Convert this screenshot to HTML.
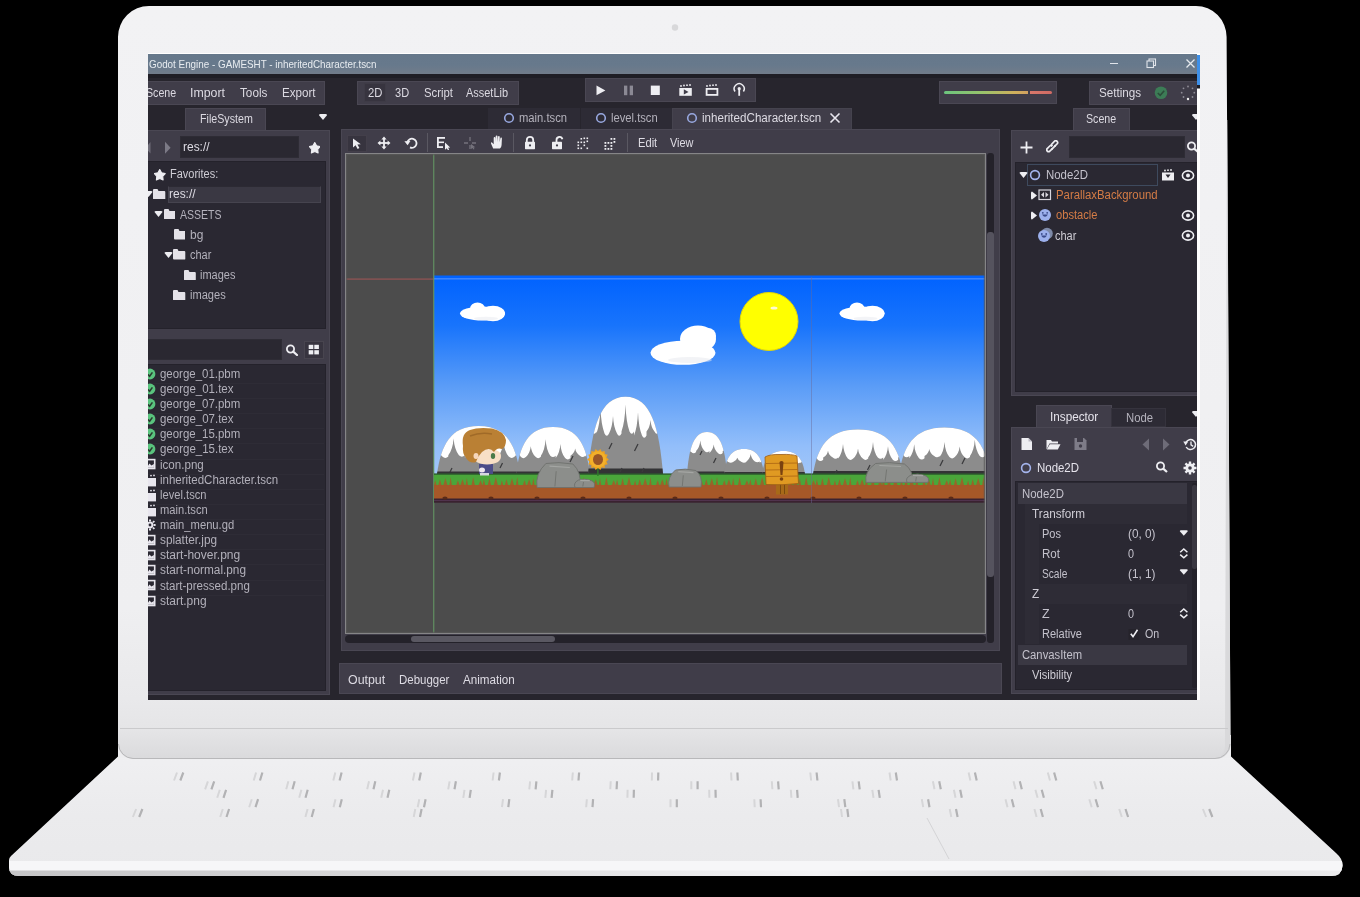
<!DOCTYPE html>
<html><head><meta charset="utf-8">
<style>
*{margin:0;padding:0;box-sizing:border-box}
html,body{width:1360px;height:897px;overflow:hidden;background:#000}
body{position:relative;font-family:"Liberation Sans",sans-serif}
.a{position:absolute}
.t{position:absolute;white-space:nowrap}
#scr{position:absolute;left:148px;top:54px;width:1049px;height:646px;background:#27252d;overflow:hidden;filter:blur(0.4px)}
</style></head><body>
<svg class="a" style="left:0;top:0" width="1360" height="897" viewBox="0 0 1360 897">
<defs>
<linearGradient id="bg1" x1="0" y1="0" x2="0" y2="1"><stop offset="0" stop-color="#f0f0f2"/><stop offset="0.5" stop-color="#ebebed"/><stop offset="1" stop-color="#e9e9eb"/></linearGradient><linearGradient id="lidg" gradientUnits="userSpaceOnUse" x1="0" y1="6" x2="0" y2="759"><stop offset="0" stop-color="#f2f2f4"/><stop offset="0.8" stop-color="#efeff1"/><stop offset="0.92" stop-color="#e9e9eb"/><stop offset="0.96" stop-color="#e5e5e7"/><stop offset="1" stop-color="#dadadc"/></linearGradient>
<linearGradient id="bot" x1="0" y1="0" x2="1" y2="0"><stop offset="0" stop-color="#c4c4c6"/><stop offset="0.35" stop-color="#dcdcde"/><stop offset="0.6" stop-color="#f2f2f4"/><stop offset="0.8" stop-color="#d6d6d8"/><stop offset="1" stop-color="#ececee"/></linearGradient>
<filter id="kb" x="-10%" y="-10%" width="120%" height="120%"><feGaussianBlur stdDeviation="0.45"/></filter><clipPath id="basec"><path d="M118 756.5 L1231 756.5 L1336 853 Q1343 859 1342.5 866 Q1342 876 1331 876 L19 876 Q9 876 9 867 L9 860 Q9 858 11 856 Z"/></clipPath>
</defs>
<g clip-path="url(#basec)">
<rect x="0" y="750" width="1360" height="130" fill="url(#bg1)"/>
<rect x="0" y="861" width="1360" height="10" fill="#f6f6f8"/>
<rect x="0" y="870.5" width="1360" height="6" fill="url(#bot)"/>
</g>
<path d="M177.0 772.5 L174.0 780.5 M256.1 772.5 L253.7 780.5 M335.3 772.5 L333.3 780.5 M414.5 772.5 L412.9 780.5 M493.6 772.5 L492.6 780.5 M572.8 772.5 L572.2 780.5 M652.0 772.5 L651.8 780.5 M731.1 772.5 L731.5 780.5 M810.3 772.5 L811.1 780.5 M889.5 772.5 L890.7 780.5 M968.6 772.5 L970.4 780.5 M1047.8 772.5 L1050.0 780.5 M207.9 781.3 L205.1 789.3 M288.4 781.3 L286.2 789.3 M369.0 781.3 L367.2 789.3 M449.6 781.3 L448.2 789.3 M530.1 781.3 L529.3 789.3 M610.7 781.3 L610.3 789.3 M691.3 781.3 L691.3 789.3 M771.8 781.3 L772.4 789.3 M852.4 781.3 L853.4 789.3 M932.9 781.3 L934.5 789.3 M1013.5 781.3 L1015.5 789.3 M1094.1 781.3 L1096.5 789.3 M219.8 789.8 L217.2 797.8 M301.4 789.8 L299.2 797.8 M383.0 789.8 L381.2 797.8 M464.5 789.8 L463.3 797.8 M546.1 789.8 L545.3 797.8 M627.6 789.8 L627.4 797.8 M709.2 789.8 L709.4 797.8 M790.8 789.8 L791.4 797.8 M872.3 789.8 L873.5 797.8 M953.9 789.8 L955.5 797.8 M1035.4 789.8 L1037.6 797.8 M251.8 799.2 L249.2 807.2 M335.5 799.2 L333.5 807.2 M419.3 799.2 L417.7 807.2 M503.0 799.2 L502.0 807.2 M586.8 799.2 L586.2 807.2 M670.5 799.2 L670.5 807.2 M754.3 799.2 L754.7 807.2 M838.0 799.2 L839.0 807.2 M921.8 799.2 L923.2 807.2 M1005.5 799.2 L1007.5 807.2 M1089.3 799.2 L1091.7 807.2 M136.1 809.0 L132.9 817.0 M222.8 809.0 L220.2 817.0 M307.6 809.0 L305.4 817.0 M415.3 809.0 L413.7 817.0 M841.0 809.0 L842.0 817.0 M949.7 809.0 L951.3 817.0 M1034.4 809.0 L1036.6 817.0 M1119.2 809.0 L1121.8 817.0 M1202.9 809.0 L1206.1 817.0" stroke="#d6d6d8" stroke-width="2" fill="none" filter="url(#kb)"/><path d="M183.3 772.5 L180.3 780.5 M262.4 772.5 L260.0 780.5 M341.6 772.5 L339.6 780.5 M420.8 772.5 L419.2 780.5 M499.9 772.5 L498.9 780.5 M579.1 772.5 L578.5 780.5 M658.3 772.5 L658.1 780.5 M737.4 772.5 L737.8 780.5 M816.6 772.5 L817.4 780.5 M895.8 772.5 L897.0 780.5 M974.9 772.5 L976.7 780.5 M1054.1 772.5 L1056.3 780.5 M214.2 781.3 L211.4 789.3 M294.7 781.3 L292.5 789.3 M375.3 781.3 L373.5 789.3 M455.9 781.3 L454.5 789.3 M536.4 781.3 L535.6 789.3 M617.0 781.3 L616.6 789.3 M697.6 781.3 L697.6 789.3 M778.1 781.3 L778.7 789.3 M858.7 781.3 L859.7 789.3 M939.2 781.3 L940.8 789.3 M1019.8 781.3 L1021.8 789.3 M1100.4 781.3 L1102.8 789.3 M226.1 789.8 L223.5 797.8 M307.7 789.8 L305.5 797.8 M389.3 789.8 L387.5 797.8 M470.8 789.8 L469.6 797.8 M552.4 789.8 L551.6 797.8 M633.9 789.8 L633.7 797.8 M715.5 789.8 L715.7 797.8 M797.1 789.8 L797.7 797.8 M878.6 789.8 L879.8 797.8 M960.2 789.8 L961.8 797.8 M1041.7 789.8 L1043.9 797.8 M258.1 799.2 L255.5 807.2 M341.8 799.2 L339.8 807.2 M425.6 799.2 L424.0 807.2 M509.3 799.2 L508.3 807.2 M593.1 799.2 L592.5 807.2 M676.8 799.2 L676.8 807.2 M760.6 799.2 L761.0 807.2 M844.3 799.2 L845.3 807.2 M928.1 799.2 L929.5 807.2 M1011.8 799.2 L1013.8 807.2 M1095.6 799.2 L1098.0 807.2 M142.4 809.0 L139.2 817.0 M229.1 809.0 L226.5 817.0 M313.9 809.0 L311.7 817.0 M421.6 809.0 L420.0 817.0 M847.3 809.0 L848.3 817.0 M956.0 809.0 L957.6 817.0 M1040.7 809.0 L1042.9 817.0 M1125.5 809.0 L1128.1 817.0 M1209.2 809.0 L1212.4 817.0" stroke="#b2b2b4" stroke-width="2.2" fill="none" filter="url(#kb)"/>
<path d="M927 818 L949 859" stroke="#d4d4d6" stroke-width="1"/><rect x="1210" y="735" width="21" height="23" fill="#eeeef0"/><rect x="118" y="735" width="16" height="23" fill="#eeeef0"/>
<path d="M118 37 A31 31 0 0 1 149 6 L1196 6 A30.6 31 0 0 1 1226.6 37 L1230.5 744 A15 15 0 0 1 1215.5 759 L133 759 A15 15 0 0 1 118 744 Z" fill="url(#lidg)"/>
<path d="M1226.9 120 L1227.3 120 L1230.5 744 A15 15 0 0 1 1216 759 L1213 759 A12 13 0 0 0 1225 746 Z" fill="#d9d9db"/>
<path d="M118.5 744 A15 15 0 0 0 133 758.5 L1215 758.5 A15 15 0 0 0 1230 744" stroke="#b8b8ba" stroke-width="1" fill="none"/>
<line x1="120" y1="728.5" x2="1228" y2="728.5" stroke="#cacacc" stroke-width="1"/>
<rect x="148" y="53" width="1052" height="1" fill="#ffffff"/>
<rect x="1197" y="54" width="3" height="646" fill="#ffffff"/>
<rect x="1197" y="55" width="3" height="30" fill="#3d8fe8"/>
<rect x="1197" y="85" width="3" height="3.5" fill="#1e1e26"/>
<circle cx="675" cy="27.5" r="3.2" fill="#d8d8da"/>
</svg>
<div id="scr"><div class="a" style="left:-148px;top:-54px;width:1360px;height:897px">
<div class="a" style="left:148px;top:54px;width:1049px;height:20px;background:linear-gradient(180deg,#66788b 0%,#67798c 55%,#717c8a 100%);"></div>
<div class="a" style="left:148px;top:74px;width:1049px;height:3.5px;background:#1f1e25;"></div>
<div class="t" style="left:149.00px;top:59.19px;font-size:11px;line-height:11px;color:#e8ecf0;transform:scaleX(0.8952);transform-origin:0 0;">Godot Engine - GAMESHT - inheritedCharacter.tscn</div>
<div class="a" style="left:1110px;top:63px;width:8px;height:1.3px;background:#e0e4ea;"></div>
<svg class="a" style="left:1146px;top:58px;" width="11" height="11" viewBox="0 0 11 11"><rect x="3" y="1" width="6.5" height="6.5" fill="none" stroke="#dfe3e9" stroke-width="1.1"/><rect x="1" y="3" width="6.5" height="6.5" fill="#66798c" stroke="#dfe3e9" stroke-width="1.1"/></svg>
<svg class="a" style="left:1185px;top:58px;" width="11" height="11" viewBox="0 0 11 11"><path d="M1.5 1.5L9.5 9.5M9.5 1.5L1.5 9.5" stroke="#e6eaee" stroke-width="1.3"/></svg>
<div class="a" style="left:140px;top:81px;width:185px;height:24px;background:#403d49;border:1px solid #4a4753;"></div>
<div class="t" style="left:146.00px;top:86.64px;font-size:12px;line-height:12px;color:#dcdae2;transform:scaleX(0.8875);transform-origin:0 0;">Scene</div>
<div class="t" style="left:190.10px;top:86.64px;font-size:12px;line-height:12px;color:#dcdae2;transform:scaleX(1.0291);transform-origin:0 0;">Import</div>
<div class="t" style="left:239.60px;top:86.64px;font-size:12px;line-height:12px;color:#dcdae2;transform:scaleX(0.9780);transform-origin:0 0;">Tools</div>
<div class="t" style="left:281.50px;top:86.64px;font-size:12px;line-height:12px;color:#dcdae2;transform:scaleX(0.9688);transform-origin:0 0;">Export</div>
<div class="a" style="left:357px;top:81px;width:162px;height:24px;background:#403d49;border:1px solid #4a4753;"></div>
<div class="a" style="left:364px;top:83px;width:22px;height:19px;background:#37343f;border:1px solid #3e3b46;"></div>
<div class="t" style="left:367.50px;top:86.64px;font-size:12px;line-height:12px;color:#dcdae2;transform:scaleX(0.9387);transform-origin:0 0;">2D</div>
<div class="t" style="left:395.30px;top:86.64px;font-size:12px;line-height:12px;color:#dcdae2;transform:scaleX(0.9191);transform-origin:0 0;">3D</div>
<div class="t" style="left:423.50px;top:86.64px;font-size:12px;line-height:12px;color:#dcdae2;transform:scaleX(0.9454);transform-origin:0 0;">Script</div>
<div class="t" style="left:466.00px;top:86.64px;font-size:12px;line-height:12px;color:#dcdae2;transform:scaleX(0.9125);transform-origin:0 0;">AssetLib</div>
<div class="a" style="left:585px;top:78px;width:171px;height:24px;background:#403d49;border:1px solid #4a4753;"></div>
<svg class="a" style="left:585px;top:78px;" width="171" height="24" viewBox="0 0 171 24"><path d="M11.5 7.6 L20.4 12.4 L11.5 17.2 Z" fill="#eeeef2"/><rect x="39" y="7.6" width="3.3" height="9.6" fill="#8b8994"/><rect x="44.7" y="7.6" width="3.3" height="9.6" fill="#8b8994"/><rect x="65.8" y="7.6" width="9" height="9.4" fill="#eeeef2"/><g fill="#eeeef2"><circle cx="96" cy="8" r="0.9"/><circle cx="99" cy="7.5" r="0.9"/><circle cx="102" cy="7.2" r="0.9"/><circle cx="105" cy="7" r="0.9"/><rect x="94.3" y="10" width="12.5" height="7.8"/></g><path d="M98.8 11.2 L103.5 13.9 L98.8 16.6Z" fill="#403d49"/><g fill="#eeeef2"><circle cx="122" cy="8" r="0.9"/><circle cx="125" cy="7.5" r="0.9"/><circle cx="128" cy="7.2" r="0.9"/><circle cx="131" cy="7" r="0.9"/><rect x="120.7" y="10" width="12.6" height="7.8"/></g><rect x="122.5" y="11.8" width="9" height="4.2" fill="#403d49"/><path d="M154.2 17.8 L154.2 11.5" stroke="#eeeef2" stroke-width="1.8"/><path d="M150 13.5 A5 5 0 1 1 158.4 13.5" fill="none" stroke="#eeeef2" stroke-width="1.5"/><circle cx="154.2" cy="10.7" r="1.6" fill="#eeeef2"/></svg>
<div class="a" style="left:939px;top:81px;width:118px;height:23px;background:#403d49;border:1px solid #4a4753;"></div>
<div class="a" style="left:944px;top:91px;width:108px;height:3px;border-radius:1.5px;background:linear-gradient(90deg,#6cc47e 0%,#98c46c 35%,#d0b05c 65%,#d0a060 78%,#403d49 78%,#403d49 80%,#d8786a 80%,#d06a64 100%)"></div>
<div class="a" style="left:1089px;top:81px;width:120px;height:24px;background:#403d49;border:1px solid #4a4753;"></div>
<div class="t" style="left:1098.80px;top:87.09px;font-size:12px;line-height:12px;color:#dcdae2;transform:scaleX(0.9732);transform-origin:0 0;">Settings</div>
<svg class="a" style="left:1152px;top:84px;" width="18" height="18" viewBox="0 0 18 18"><circle cx="9" cy="8.8" r="6.3" fill="#3c7c56"/><path d="M5.8 9 L8.2 11.3 L12.2 6.8" fill="none" stroke="#2c4c3a" stroke-width="1.6"/></svg>
<svg class="a" style="left:1178px;top:83px;" width="20" height="20" viewBox="0 0 20 20"><g fill="#8e8c96"><circle cx="10" cy="3.5" r="0.9"/><circle cx="14.5" cy="5.3" r="0.9"/><circle cx="16.3" cy="9.7" r="0.9"/><circle cx="14.5" cy="14" r="0.9"/><circle cx="5.5" cy="14" r="0.9"/><circle cx="3.7" cy="9.7" r="0.9"/><circle cx="5.5" cy="5.3" r="0.9"/></g><circle cx="10" cy="16" r="1.2" fill="#f0f0f0"/></svg>
<div class="a" style="left:185px;top:108px;width:81px;height:23px;background:#403d49;border:1px solid #4a4753;border-bottom:none"></div>
<div class="t" style="left:199.50px;top:112.74px;font-size:12px;line-height:12px;color:#dcdae2;transform:scaleX(0.8897);transform-origin:0 0;">FileSystem</div>
<svg class="a" style="left:317px;top:112px;" width="12" height="10" viewBox="0 0 12 10"><path d="M2 3.2 Q2 2 3.5 2 L8.5 2 Q10 2 10 3.2 L6 8 Z" fill="#eeeef2"/></svg>
<div class="a" style="left:488px;top:108px;width:92px;height:21px;background:#2d2b35;"></div>
<div class="a" style="left:581px;top:108px;width:91px;height:21px;background:#2d2b35;"></div>
<div class="a" style="left:672px;top:108px;width:180px;height:22px;background:#403d49;border:1px solid #45434e;border-bottom:none"></div>
<svg class="a" style="left:501.8px;top:111px;" width="14" height="14" viewBox="0 0 14 14"><circle cx="7" cy="7" r="4.3" fill="none" stroke="#98a8e0" stroke-width="1.6"/></svg>
<svg class="a" style="left:594px;top:111px;" width="14" height="14" viewBox="0 0 14 14"><circle cx="7" cy="7" r="4.3" fill="none" stroke="#98a8e0" stroke-width="1.6"/></svg>
<svg class="a" style="left:685.3px;top:111px;" width="14" height="14" viewBox="0 0 14 14"><circle cx="7" cy="7" r="4.3" fill="none" stroke="#98a8e0" stroke-width="1.6"/></svg>
<div class="t" style="left:519.10px;top:112.44px;font-size:12px;line-height:12px;color:#b4b2bc;transform:scaleX(0.9366);transform-origin:0 0;">main.tscn</div>
<div class="t" style="left:611.30px;top:112.44px;font-size:12px;line-height:12px;color:#b4b2bc;transform:scaleX(0.9335);transform-origin:0 0;">level.tscn</div>
<div class="t" style="left:702.10px;top:112.44px;font-size:12px;line-height:12px;color:#dedce4;transform:scaleX(0.9667);transform-origin:0 0;">inheritedCharacter.tscn</div>
<svg class="a" style="left:829px;top:112px;" width="12" height="12" viewBox="0 0 12 12"><path d="M1.5 1.5L10.5 10.5M10.5 1.5L1.5 10.5" stroke="#e8e6ee" stroke-width="1.6"/></svg>
<div class="a" style="left:1073px;top:108px;width:57px;height:23px;background:#403d49;border:1px solid #4a4753;border-bottom:none"></div>
<div class="t" style="left:1086.30px;top:112.59px;font-size:12px;line-height:12px;color:#dcdae2;transform:scaleX(0.8875);transform-origin:0 0;">Scene</div>
<svg class="a" style="left:1190px;top:112px;" width="12" height="10" viewBox="0 0 12 10"><path d="M2 3.2 Q2 2 3.5 2 L8.5 2 Q10 2 10 3.2 L6 8 Z" fill="#eeeef2"/></svg>
<div class="a" style="left:140px;top:130px;width:190px;height:565px;background:#403d49;border:1px solid #4a4753;"></div>
<svg class="a" style="left:144px;top:140px;" width="30" height="16" viewBox="0 0 30 16"><path d="M6.5 2 L1.5 7.8 L6.5 13.6 Z" fill="#6e6c78"/><path d="M21 1.8 L26.6 7.8 L21 13.8 Z" fill="#7c7a86"/></svg>
<div class="a" style="left:180px;top:136px;width:119px;height:22px;background:#2a2831;border:1px solid #2e2c35;"></div>
<div class="t" style="left:183.40px;top:141.34px;font-size:12px;line-height:12px;color:#dedce4;transform:scaleX(0.9972);transform-origin:0 0;">res://</div>
<svg class="a" style="left:308.5px;top:142px;" width="11.5" height="12.5" viewBox="0 0 11.5 12.5"><polygon points="5.75,0.60 7.58,3.84 11.22,4.57 8.71,7.31 9.13,11.00 5.75,9.46 2.37,11.00 2.79,7.31 0.28,4.57 3.92,3.84" fill="#eeeef2" stroke="#eeeef2" stroke-width="1.1" stroke-linejoin="round"/></svg>
<div class="a" style="left:140px;top:161px;width:186px;height:168px;background:#2a2832;border:1px solid #24222b;"></div>
<svg class="a" style="left:154px;top:169px;" width="11.5" height="12.5" viewBox="0 0 11.5 12.5"><polygon points="5.75,0.60 7.58,3.84 11.22,4.57 8.71,7.31 9.13,11.00 5.75,9.46 2.37,11.00 2.79,7.31 0.28,4.57 3.92,3.84" fill="#eeeef2" stroke="#eeeef2" stroke-width="1.1" stroke-linejoin="round"/></svg>
<div class="t" style="left:170.10px;top:168.24px;font-size:12px;line-height:12px;color:#cfcdd5;transform:scaleX(0.9149);transform-origin:0 0;">Favorites:</div>
<div class="a" style="left:168px;top:186px;width:153px;height:17px;background:#3a3843;border:1px solid #46444f;border-top-color:#2c2a33"></div>
<svg class="a" style="left:144px;top:191px;" width="9" height="7" viewBox="0 0 9 7"><path d="M0.5 1 Q0.5 0 2 0 L7 0 Q8.5 0 8.5 1 L4.5 6 Z" fill="#eeeef2"/></svg>
<svg class="a" style="left:153.4px;top:189px;" width="12.3" height="10.4" viewBox="0 0 12.3 10.4"><path d="M0 1 Q0 0 1 0 L4.5 0 L5.5 2 L11.3 2 Q12.3 2 12.3 3 L12.3 9.9 Q12.3 10.4 11.3 10.4 L1 10.4 Q0 10.4 0 9.4 Z" fill="#e4e2e8"/></svg>
<div class="t" style="left:169.40px;top:188.04px;font-size:12px;line-height:12px;color:#dedce4;transform:scaleX(0.9972);transform-origin:0 0;">res://</div>
<svg class="a" style="left:154px;top:211px;" width="9" height="7" viewBox="0 0 9 7"><path d="M0.5 1 Q0.5 0 2 0 L7 0 Q8.5 0 8.5 1 L4.5 6 Z" fill="#eeeef2"/></svg>
<svg class="a" style="left:163.9px;top:209px;" width="11.6" height="10.4" viewBox="0 0 11.6 10.4"><path d="M0 1 Q0 0 1 0 L4.5 0 L5.5 2 L10.6 2 Q11.6 2 11.6 3 L11.6 9.9 Q11.6 10.4 10.6 10.4 L1 10.4 Q0 10.4 0 9.4 Z" fill="#e4e2e8"/></svg>
<div class="t" style="left:179.60px;top:208.54px;font-size:12px;line-height:12px;color:#b4b2bc;transform:scaleX(0.8765);transform-origin:0 0;">ASSETS</div>
<svg class="a" style="left:173.6px;top:229.2px;" width="11.9" height="10.4" viewBox="0 0 11.9 10.4"><path d="M0 1 Q0 0 1 0 L4.5 0 L5.5 2 L10.9 2 Q11.9 2 11.9 3 L11.9 9.9 Q11.9 10.4 10.9 10.4 L1 10.4 Q0 10.4 0 9.4 Z" fill="#e4e2e8"/></svg>
<div class="t" style="left:189.70px;top:228.74px;font-size:12px;line-height:12px;color:#b4b2bc;transform:scaleX(0.9964);transform-origin:0 0;">bg</div>
<svg class="a" style="left:164px;top:251.5px;" width="9" height="7" viewBox="0 0 9 7"><path d="M0.5 1 Q0.5 0 2 0 L7 0 Q8.5 0 8.5 1 L4.5 6 Z" fill="#eeeef2"/></svg>
<svg class="a" style="left:173.4px;top:249.4px;" width="12.3" height="10.4" viewBox="0 0 12.3 10.4"><path d="M0 1 Q0 0 1 0 L4.5 0 L5.5 2 L11.3 2 Q12.3 2 12.3 3 L12.3 9.9 Q12.3 10.4 11.3 10.4 L1 10.4 Q0 10.4 0 9.4 Z" fill="#e4e2e8"/></svg>
<div class="t" style="left:190.20px;top:248.94px;font-size:12px;line-height:12px;color:#b4b2bc;transform:scaleX(0.9124);transform-origin:0 0;">char</div>
<svg class="a" style="left:183.9px;top:269.6px;" width="11.8" height="10.4" viewBox="0 0 11.8 10.4"><path d="M0 1 Q0 0 1 0 L4.5 0 L5.5 2 L10.8 2 Q11.8 2 11.8 3 L11.8 9.9 Q11.8 10.4 10.8 10.4 L1 10.4 Q0 10.4 0 9.4 Z" fill="#e4e2e8"/></svg>
<div class="t" style="left:199.80px;top:269.14px;font-size:12px;line-height:12px;color:#b4b2bc;transform:scaleX(0.9151);transform-origin:0 0;">images</div>
<svg class="a" style="left:173.4px;top:289.8px;" width="12.3" height="10.4" viewBox="0 0 12.3 10.4"><path d="M0 1 Q0 0 1 0 L4.5 0 L5.5 2 L11.3 2 Q12.3 2 12.3 3 L12.3 9.9 Q12.3 10.4 11.3 10.4 L1 10.4 Q0 10.4 0 9.4 Z" fill="#e4e2e8"/></svg>
<div class="t" style="left:189.50px;top:289.34px;font-size:12px;line-height:12px;color:#b4b2bc;transform:scaleX(0.9228);transform-origin:0 0;">images</div>
<div class="a" style="left:140px;top:339px;width:142px;height:21px;background:#2a2831;border:1px solid #2e2c35;"></div>
<svg class="a" style="left:285px;top:344px;" width="14" height="12" viewBox="0 0 14 12"><circle cx="5.5" cy="5" r="3.6" fill="none" stroke="#eeeef2" stroke-width="1.8"/><path d="M8.2 7.6 L12 11" stroke="#eeeef2" stroke-width="2.2" stroke-linecap="round"/></svg>
<div class="a" style="left:304px;top:341px;width:20px;height:18px;background:#37343f;border:1px solid #48454f;"></div>
<svg class="a" style="left:308px;top:344px;" width="12" height="12" viewBox="0 0 12 12"><g fill="#eeeef2"><rect x="0.7" y="0.8" width="4.6" height="4.2"/><rect x="6.3" y="0.8" width="4.6" height="4.2"/><rect x="0.7" y="6.2" width="4.6" height="4.2"/><rect x="6.3" y="6.2" width="4.6" height="4.2"/></g></svg>
<div class="a" style="left:140px;top:364px;width:186px;height:327px;background:#2a2832;border:1px solid #24222b;"></div>
<div class="a" style="left:148px;top:383px;width:176px;height:1px;background:#2e2c36;"></div>
<svg class="a" style="left:143px;top:367.7px;" width="14" height="12" viewBox="0 0 14 12"><circle cx="7" cy="6" r="5.4" fill="#5ac47e"/><path d="M4.6 6.4 L6.6 8.2 L9.4 4.4" fill="none" stroke="#2a3a30" stroke-width="1.6"/></svg>
<div class="t" style="left:159.80px;top:367.84px;font-size:12px;line-height:12px;color:#b2b0ba;transform:scaleX(0.9540);transform-origin:0 0;">george_01.pbm</div>
<div class="a" style="left:148px;top:398px;width:176px;height:1px;background:#2e2c36;"></div>
<svg class="a" style="left:143px;top:382.82px;" width="14" height="12" viewBox="0 0 14 12"><circle cx="7" cy="6" r="5.4" fill="#5ac47e"/><path d="M4.6 6.4 L6.6 8.2 L9.4 4.4" fill="none" stroke="#2a3a30" stroke-width="1.6"/></svg>
<div class="t" style="left:159.80px;top:382.96px;font-size:12px;line-height:12px;color:#b2b0ba;transform:scaleX(0.9579);transform-origin:0 0;">george_01.tex</div>
<div class="a" style="left:148px;top:413px;width:176px;height:1px;background:#2e2c36;"></div>
<svg class="a" style="left:143px;top:397.94px;" width="14" height="12" viewBox="0 0 14 12"><circle cx="7" cy="6" r="5.4" fill="#5ac47e"/><path d="M4.6 6.4 L6.6 8.2 L9.4 4.4" fill="none" stroke="#2a3a30" stroke-width="1.6"/></svg>
<div class="t" style="left:159.80px;top:398.08px;font-size:12px;line-height:12px;color:#b2b0ba;transform:scaleX(0.9540);transform-origin:0 0;">george_07.pbm</div>
<div class="a" style="left:148px;top:428px;width:176px;height:1px;background:#2e2c36;"></div>
<svg class="a" style="left:143px;top:413.06px;" width="14" height="12" viewBox="0 0 14 12"><circle cx="7" cy="6" r="5.4" fill="#5ac47e"/><path d="M4.6 6.4 L6.6 8.2 L9.4 4.4" fill="none" stroke="#2a3a30" stroke-width="1.6"/></svg>
<div class="t" style="left:159.80px;top:413.20px;font-size:12px;line-height:12px;color:#b2b0ba;transform:scaleX(0.9579);transform-origin:0 0;">george_07.tex</div>
<div class="a" style="left:148px;top:443px;width:176px;height:1px;background:#2e2c36;"></div>
<svg class="a" style="left:143px;top:428.18px;" width="14" height="12" viewBox="0 0 14 12"><circle cx="7" cy="6" r="5.4" fill="#5ac47e"/><path d="M4.6 6.4 L6.6 8.2 L9.4 4.4" fill="none" stroke="#2a3a30" stroke-width="1.6"/></svg>
<div class="t" style="left:159.80px;top:428.32px;font-size:12px;line-height:12px;color:#b2b0ba;transform:scaleX(0.9540);transform-origin:0 0;">george_15.pbm</div>
<div class="a" style="left:148px;top:459px;width:176px;height:1px;background:#2e2c36;"></div>
<svg class="a" style="left:143px;top:443.3px;" width="14" height="12" viewBox="0 0 14 12"><circle cx="7" cy="6" r="5.4" fill="#5ac47e"/><path d="M4.6 6.4 L6.6 8.2 L9.4 4.4" fill="none" stroke="#2a3a30" stroke-width="1.6"/></svg>
<div class="t" style="left:159.80px;top:443.44px;font-size:12px;line-height:12px;color:#b2b0ba;transform:scaleX(0.9579);transform-origin:0 0;">george_15.tex</div>
<div class="a" style="left:148px;top:474px;width:176px;height:1px;background:#2e2c36;"></div>
<svg class="a" style="left:143px;top:458.42px;" width="14" height="12" viewBox="0 0 14 12"><rect x="2" y="0.8" width="10.5" height="10.5" fill="#e8e6ee"/><rect x="3.6" y="2.4" width="7.3" height="7.3" fill="#2a2832"/><path d="M3.6 9.7 L6.5 5.6 L8.4 7.6 L10.9 6 L10.9 9.7Z" fill="#e8e6ee"/></svg>
<div class="t" style="left:159.80px;top:458.56px;font-size:12px;line-height:12px;color:#b2b0ba;transform:scaleX(0.9654);transform-origin:0 0;">icon.png</div>
<div class="a" style="left:148px;top:489px;width:176px;height:1px;background:#2e2c36;"></div>
<svg class="a" style="left:143px;top:473.53999999999996px;" width="14" height="13" viewBox="0 0 14 13"><g fill="#e8e6ee"><circle cx="8" cy="1.6" r="0.9"/><circle cx="11" cy="1.4" r="0.9"/><rect x="2" y="4" width="11" height="8.4"/></g></svg>
<div class="t" style="left:159.80px;top:473.68px;font-size:12px;line-height:12px;color:#b2b0ba;transform:scaleX(0.9578);transform-origin:0 0;">inheritedCharacter.tscn</div>
<div class="a" style="left:148px;top:504px;width:176px;height:1px;background:#2e2c36;"></div>
<svg class="a" style="left:143px;top:488.65999999999997px;" width="14" height="13" viewBox="0 0 14 13"><g fill="#e8e6ee"><circle cx="8" cy="1.6" r="0.9"/><circle cx="11" cy="1.4" r="0.9"/><rect x="2" y="4" width="11" height="8.4"/></g></svg>
<div class="t" style="left:159.80px;top:488.80px;font-size:12px;line-height:12px;color:#b2b0ba;transform:scaleX(0.9295);transform-origin:0 0;">level.tscn</div>
<div class="a" style="left:148px;top:519px;width:176px;height:1px;background:#2e2c36;"></div>
<svg class="a" style="left:143px;top:503.7799999999999px;" width="14" height="13" viewBox="0 0 14 13"><g fill="#e8e6ee"><circle cx="8" cy="1.6" r="0.9"/><circle cx="11" cy="1.4" r="0.9"/><rect x="2" y="4" width="11" height="8.4"/></g></svg>
<div class="t" style="left:159.80px;top:503.92px;font-size:12px;line-height:12px;color:#b2b0ba;transform:scaleX(0.9288);transform-origin:0 0;">main.tscn</div>
<div class="a" style="left:148px;top:534px;width:176px;height:1px;background:#2e2c36;"></div>
<svg class="a" style="left:143px;top:518.9000000000001px;" width="14" height="12" viewBox="0 0 14 12"><g fill="#e8e6ee"><circle cx="7" cy="6" r="3.4"/><path d="M6 0.6h2v2h-2zM6 9.4h2v2h-2zM1.4 5h2v2h-2zM10.6 5h2v2h-2zM2.5 1.8l1.4-1.1 1.3 1.5-1.4 1.1zM9.3 9l1.4-1.1 1.3 1.5-1.4 1.1zM2.5 10.2l1.3-1.5 1.4 1.1-1.3 1.5zM9.3 3l1.3-1.5 1.4 1.1-1.3 1.5z"/></g><circle cx="7" cy="6" r="1.4" fill="#2a2832"/></svg>
<div class="t" style="left:159.80px;top:519.04px;font-size:12px;line-height:12px;color:#b2b0ba;transform:scaleX(0.9347);transform-origin:0 0;">main_menu.gd</div>
<div class="a" style="left:148px;top:549px;width:176px;height:1px;background:#2e2c36;"></div>
<svg class="a" style="left:143px;top:534.02px;" width="14" height="12" viewBox="0 0 14 12"><rect x="2" y="0.8" width="10.5" height="10.5" fill="#e8e6ee"/><rect x="3.6" y="2.4" width="7.3" height="7.3" fill="#2a2832"/><path d="M3.6 9.7 L6.5 5.6 L8.4 7.6 L10.9 6 L10.9 9.7Z" fill="#e8e6ee"/></svg>
<div class="t" style="left:159.80px;top:534.16px;font-size:12px;line-height:12px;color:#b2b0ba;transform:scaleX(0.9821);transform-origin:0 0;">splatter.jpg</div>
<div class="a" style="left:148px;top:564px;width:176px;height:1px;background:#2e2c36;"></div>
<svg class="a" style="left:143px;top:549.1400000000001px;" width="14" height="12" viewBox="0 0 14 12"><rect x="2" y="0.8" width="10.5" height="10.5" fill="#e8e6ee"/><rect x="3.6" y="2.4" width="7.3" height="7.3" fill="#2a2832"/><path d="M3.6 9.7 L6.5 5.6 L8.4 7.6 L10.9 6 L10.9 9.7Z" fill="#e8e6ee"/></svg>
<div class="t" style="left:159.80px;top:549.28px;font-size:12px;line-height:12px;color:#b2b0ba;transform:scaleX(1.0019);transform-origin:0 0;">start-hover.png</div>
<div class="a" style="left:148px;top:580px;width:176px;height:1px;background:#2e2c36;"></div>
<svg class="a" style="left:143px;top:564.26px;" width="14" height="12" viewBox="0 0 14 12"><rect x="2" y="0.8" width="10.5" height="10.5" fill="#e8e6ee"/><rect x="3.6" y="2.4" width="7.3" height="7.3" fill="#2a2832"/><path d="M3.6 9.7 L6.5 5.6 L8.4 7.6 L10.9 6 L10.9 9.7Z" fill="#e8e6ee"/></svg>
<div class="t" style="left:159.80px;top:564.40px;font-size:12px;line-height:12px;color:#b2b0ba;transform:scaleX(0.9843);transform-origin:0 0;">start-normal.png</div>
<div class="a" style="left:148px;top:595px;width:176px;height:1px;background:#2e2c36;"></div>
<svg class="a" style="left:143px;top:579.38px;" width="14" height="12" viewBox="0 0 14 12"><rect x="2" y="0.8" width="10.5" height="10.5" fill="#e8e6ee"/><rect x="3.6" y="2.4" width="7.3" height="7.3" fill="#2a2832"/><path d="M3.6 9.7 L6.5 5.6 L8.4 7.6 L10.9 6 L10.9 9.7Z" fill="#e8e6ee"/></svg>
<div class="t" style="left:159.80px;top:579.52px;font-size:12px;line-height:12px;color:#b2b0ba;transform:scaleX(0.9627);transform-origin:0 0;">start-pressed.png</div>
<svg class="a" style="left:143px;top:594.5px;" width="14" height="12" viewBox="0 0 14 12"><rect x="2" y="0.8" width="10.5" height="10.5" fill="#e8e6ee"/><rect x="3.6" y="2.4" width="7.3" height="7.3" fill="#2a2832"/><path d="M3.6 9.7 L6.5 5.6 L8.4 7.6 L10.9 6 L10.9 9.7Z" fill="#e8e6ee"/></svg>
<div class="t" style="left:159.80px;top:594.64px;font-size:12px;line-height:12px;color:#b2b0ba;transform:scaleX(0.9979);transform-origin:0 0;">start.png</div>
<div class="a" style="left:341px;top:129px;width:659px;height:522px;background:#403d49;border:1px solid #4a4753;"></div>
<div class="a" style="left:347px;top:135px;width:20px;height:17px;background:#37343f;border:1px solid #433f4a;"></div>
<svg class="a" style="left:351px;top:137px;" width="13" height="13" viewBox="0 0 13 13"><path d="M2 1.5 L2 10.5 L4.6 8.3 L6.6 12 L8.4 11 L6.4 7.5 L9.8 7.2 Z" fill="#eeeef2"/></svg>
<svg class="a" style="left:377px;top:136px;" width="14" height="14" viewBox="0 0 14 14"><g fill="#eeeef2"><path d="M7 0.5 L9.6 3.4 L4.4 3.4Z M7 13.5 L9.6 10.6 L4.4 10.6Z M0.5 7 L3.4 4.4 L3.4 9.6Z M13.5 7 L10.6 4.4 L10.6 9.6Z"/><rect x="6.1" y="3" width="1.8" height="8"/><rect x="3" y="6.1" width="8" height="1.8"/></g></svg>
<svg class="a" style="left:404px;top:136px;" width="14" height="14" viewBox="0 0 14 14"><path d="M3.4 6.5 A4.6 4.6 0 1 1 6 11.4" fill="none" stroke="#eeeef2" stroke-width="1.8"/><path d="M0.4 5.2 L3.6 9.2 L6.4 5 Z" fill="#eeeef2"/></svg>
<div class="a" style="left:427px;top:133px;width:1.2px;height:19px;background:#5a5862;"></div>
<svg class="a" style="left:436px;top:136px;" width="15" height="14" viewBox="0 0 15 14"><g fill="#eeeef2"><rect x="1" y="1" width="1.8" height="11"/><rect x="1" y="1" width="8" height="1.8"/><rect x="1" y="5.5" width="7" height="1.6"/><rect x="1" y="10.2" width="6" height="1.8"/><path d="M9 6.5 L9 13.8 L10.8 12.3 L12 14.3 L13.2 13.6 L12 11.7 L14.2 11.4Z"/></g></svg>
<svg class="a" style="left:463px;top:136px;" width="14" height="14" viewBox="0 0 14 14"><g stroke="#74727c" stroke-width="1.3" fill="none"><path d="M7 1 V5 M7 9 V13 M1 7 H5 M9 7 H13"/></g><path d="M8 8 L8 13 L9.5 12 L10.5 13.6 L11.5 13 L10.5 11.4 L12.3 11.2Z" fill="#74727c"/></svg>
<svg class="a" style="left:490px;top:135px;" width="14" height="15" viewBox="0 0 14 15"><path d="M3.2 13.5 L1 8.4 Q0.8 7.2 2 7.4 L3.7 9.2 L3.7 3 Q3.7 2 4.6 2 Q5.4 2 5.4 3 L5.4 7 L5.7 1.6 Q5.7 0.6 6.6 0.6 Q7.5 0.6 7.5 1.6 L7.5 7 L8 2 Q8 1 8.9 1 Q9.7 1 9.7 2 L9.7 7.2 L10.3 3.4 Q10.4 2.5 11.2 2.6 Q12 2.7 11.9 3.6 L11.6 10 Q11.4 12.5 10 13.5 Z" fill="#eeeef2"/></svg>
<div class="a" style="left:513px;top:133px;width:1.2px;height:19px;background:#5a5862;"></div>
<svg class="a" style="left:523px;top:135px;" width="14" height="15" viewBox="0 0 14 15"><path d="M3.8 7 V5 A3.2 3.2 0 0 1 10.2 5 V7" fill="none" stroke="#eeeef2" stroke-width="1.8"/><rect x="2" y="6.8" width="10" height="7.4" rx="0.6" fill="#eeeef2"/><circle cx="7" cy="10.4" r="1.1" fill="#403d49"/></svg>
<svg class="a" style="left:550px;top:135px;" width="14" height="15" viewBox="0 0 14 15"><path d="M6.5 7 V5 A3 3 0 0 1 12.4 4.2" fill="none" stroke="#eeeef2" stroke-width="1.8"/><rect x="2" y="6.8" width="10" height="7.4" rx="0.6" fill="#eeeef2"/><circle cx="7" cy="10.4" r="1.1" fill="#403d49"/></svg>
<svg class="a" style="left:576px;top:136px;" width="15" height="14" viewBox="0 0 15 14"><g fill="#eeeef2"><rect x="1.5" y="5.5" width="1.6" height="1.6"/><rect x="1.5" y="8.5" width="1.6" height="1.6"/><rect x="1.5" y="11.5" width="1.6" height="1.6"/><rect x="4.5" y="11.5" width="1.6" height="1.6"/><rect x="4.5" y="5.5" width="1.6" height="1.6"/><rect x="7.5" y="5.5" width="1.6" height="1.6"/><rect x="7.5" y="8.5" width="1.6" height="1.6"/><rect x="7.5" y="1.5" width="1.6" height="1.6"/><rect x="10.5" y="1.5" width="1.6" height="1.6"/><rect x="10.5" y="4.5" width="1.6" height="1.6"/><rect x="10.5" y="11.5" width="1.6" height="1.6"/><rect x="4.5" y="2" width="1.6" height="1.6"/></g></svg>
<svg class="a" style="left:603px;top:136px;" width="15" height="14" viewBox="0 0 15 14"><g fill="#eeeef2"><rect x="1.5" y="6" width="1.8" height="1.8"/><rect x="1.5" y="9" width="1.8" height="1.8"/><rect x="1.5" y="12" width="1.8" height="1.8"/><rect x="4.5" y="12" width="1.8" height="1.8"/><rect x="4.5" y="6" width="1.8" height="1.8"/><rect x="7.5" y="6" width="1.8" height="1.8"/><rect x="7.5" y="9" width="1.8" height="1.8"/><rect x="7.5" y="2" width="1.8" height="1.8"/><rect x="10.5" y="2" width="1.8" height="1.8"/><rect x="10.5" y="5" width="1.8" height="1.8"/><rect x="7.5" y="12" width="1.8" height="1.8"/></g></svg>
<div class="a" style="left:627px;top:133px;width:1.2px;height:19px;background:#5a5862;"></div>
<div class="t" style="left:637.60px;top:137.24px;font-size:12px;line-height:12px;color:#dedce4;transform:scaleX(0.9285);transform-origin:0 0;">Edit</div>
<div class="t" style="left:670.30px;top:137.24px;font-size:12px;line-height:12px;color:#dedce4;transform:scaleX(0.9110);transform-origin:0 0;">View</div>
<svg class="a" style="left:345px;top:153px;" width="641" height="481" viewBox="345 153 641 481"><defs><linearGradient id="sky" x1="0" y1="0" x2="0" y2="1"><stop offset="0" stop-color="#0062ff"/><stop offset="0.25" stop-color="#1874fc"/><stop offset="0.55" stop-color="#5a9cf7"/><stop offset="0.85" stop-color="#92befa"/><stop offset="1" stop-color="#a2c6f8"/></linearGradient></defs><rect x="345" y="153" width="641" height="481" fill="#4c4c4c"/><rect x="434" y="275.5" width="552" height="200" fill="url(#sky)"/><rect x="434" y="278" width="552" height="1.6" fill="#4a8cff" opacity="0.8"/><rect x="345" y="278.5" width="89" height="1.2" fill="#955454"/><rect x="433.2" y="153" width="1.1" height="481" fill="#639463"/><g fill="#ffffff"><ellipse cx="482.5" cy="313.5" rx="22.5" ry="7"/><ellipse cx="477.5" cy="308.5" rx="7.5" ry="6"/><ellipse cx="493" cy="313.5" rx="12" ry="7.8"/></g><ellipse cx="486" cy="318.5" rx="12" ry="1.8" fill="#e8eaf0" opacity="0.5"/><g fill="#ffffff"><ellipse cx="862.0" cy="313.5" rx="22.5" ry="7"/><ellipse cx="857.0" cy="308.5" rx="7.5" ry="6"/><ellipse cx="872.5" cy="313.5" rx="12" ry="7.8"/></g><ellipse cx="865.5" cy="318.5" rx="12" ry="1.8" fill="#e8eaf0" opacity="0.5"/><g fill="#ffffff"><ellipse cx="683" cy="352.8" rx="32.5" ry="12"/><ellipse cx="698" cy="339" rx="18" ry="13.5"/><ellipse cx="708" cy="336" rx="8" ry="8"/></g><ellipse cx="690" cy="360" rx="22" ry="3" fill="#e6e8ee" opacity="0.5"/><circle cx="769" cy="321.5" r="29" fill="#ffff00" stroke="#e6d800" stroke-width="1"/><ellipse cx="774" cy="308" rx="3.5" ry="1.6" fill="#fffbd0"/><clipPath id="mc437"><path d="M437 474 C441.1 445.2 450.3 426.0 478.5 426.0 C506.7 426.0 515.9 445.2 520 474 Z"/></clipPath><path d="M437 474 C441.1 445.2 450.3 426.0 478.5 426.0 C506.7 426.0 515.9 445.2 520 474 Z" fill="#8c8c8c"/><g clip-path="url(#mc437)"><path d="M523 423 L434 423 L434 457.7 L431.7 456.5 Q436.2 452.7 437.0 445.7 Q437.8 452.7 442.3 456.5 Q445.3 459.4 448.3 456.5 L448.3 455.3 Q452.8 449.4 453.6 438.5 Q454.4 449.4 458.9 455.3 Q461.9 458.2 464.9 455.3 L464.9 457.7 Q469.4 452.6 470.2 443.3 Q471.0 452.6 475.5 457.7 Q478.5 460.6 481.5 457.7 L481.5 455.3 Q486.0 452.8 486.8 448.1 Q487.6 452.8 492.1 455.3 Q495.1 458.2 498.1 455.3 L498.1 456.5 Q502.6 451.0 503.4 440.9 Q504.2 451.0 508.7 456.5 Q511.7 459.4 514.7 456.5 L514.7 456.5 Q519.2 452.7 520.0 445.7 Q520.8 452.7 525.3 456.5 Q528.3 459.4 531.3 456.5 L523 457.7 Z" fill="#ffffff"/><rect x="437" y="471.5" width="83" height="2.5" fill="#333335"/><path d="M450 472 l2.0 -4.0" stroke="#3a3a3c" stroke-width="1.3"/><path d="M500 468 l2.5 -5.0" stroke="#3a3a3c" stroke-width="1.3"/></g><clipPath id="mc516"><path d="M516 474 C519.7 445.8 527.8 427.0 553.0 427.0 C578.2 427.0 586.3 445.8 590 474 Z"/></clipPath><path d="M516 474 C519.7 445.8 527.8 427.0 553.0 427.0 C578.2 427.0 586.3 445.8 590 474 Z" fill="#8c8c8c"/><g clip-path="url(#mc516)"><path d="M593 424 L513 424 L513 458.0 L511.3 456.8 Q515.3 451.5 516.0 441.6 Q516.7 451.5 520.7 456.8 Q523.4 459.7 526.1 456.8 L526.1 456.8 Q530.1 453.1 530.8 446.3 Q531.5 453.1 535.5 456.8 Q538.2 459.7 540.9 456.8 L540.9 455.7 Q544.9 449.9 545.6 439.2 Q546.3 449.9 550.3 455.7 Q553.0 458.5 555.7 455.7 L555.7 458.0 Q559.7 453.1 560.4 443.9 Q561.1 453.1 565.1 458.0 Q567.8 460.8 570.5 458.0 L570.5 455.7 Q574.5 453.2 575.2 448.6 Q575.9 453.2 579.9 455.7 Q582.6 458.5 585.3 455.7 L585.3 456.8 Q589.3 451.5 590.0 441.6 Q590.7 451.5 594.7 456.8 Q597.4 459.7 600.1 456.8 L593 458.0 Z" fill="#ffffff"/><rect x="516" y="471.5" width="74" height="2.5" fill="#333335"/><path d="M545 470 l2.5 -5.0" stroke="#3a3a3c" stroke-width="1.3"/><path d="M570 462 l3.0 -6.0" stroke="#3a3a3c" stroke-width="1.3"/></g><clipPath id="mc588"><path d="M588 474 C591.8 427.6 600.0 396.7 625.5 396.7 C651.0 396.7 659.2 427.6 663 474 Z"/></clipPath><path d="M588 474 C591.8 427.6 600.0 396.7 625.5 396.7 C651.0 396.7 659.2 427.6 663 474 Z" fill="#8c8c8c"/><g clip-path="url(#mc588)"><path d="M666 393.7 L585 393.7 L585 435.4 L584.0 431.5 Q587.4 427.4 588.0 419.9 Q588.6 427.4 592.0 431.5 Q594.2 436.1 596.5 431.5 L596.5 433.4 Q599.9 424.6 600.5 408.3 Q601.1 424.6 604.5 433.4 Q606.8 438.1 609.0 433.4 L609.0 433.4 Q612.4 427.3 613.0 416.0 Q613.6 427.3 617.0 433.4 Q619.2 438.1 621.5 433.4 L621.5 431.5 Q624.9 422.0 625.5 404.4 Q626.1 422.0 629.5 431.5 Q631.8 436.1 634.0 431.5 L634.0 435.4 Q637.4 427.2 638.0 412.2 Q638.6 427.2 642.0 435.4 Q644.2 440.0 646.5 435.4 L646.5 431.5 Q649.9 427.4 650.5 419.9 Q651.1 427.4 654.5 431.5 Q656.8 436.1 659.0 431.5 L659.0 433.4 Q662.4 424.6 663.0 408.3 Q663.6 424.6 667.0 433.4 Q669.2 438.1 671.5 433.4 L666 435.4 Z" fill="#ffffff"/><rect x="588" y="468.5" width="75" height="5.5" fill="#333335"/><path d="M609 449 l3.0 -6.0" stroke="#3a3a3c" stroke-width="1.3"/><path d="M638 444 l-3.5 7.0" stroke="#3a3a3c" stroke-width="1.3"/><path d="M620 472 l2.0 -4.0" stroke="#3a3a3c" stroke-width="1.3"/><path d="M642 472 l2.0 -4.0" stroke="#3a3a3c" stroke-width="1.3"/></g><clipPath id="mc687"><path d="M687 474 C689.0 448.8 693.4 432.0 707.0 432.0 C720.6 432.0 725.0 448.8 727 474 Z"/></clipPath><path d="M687 474 C689.0 448.8 693.4 432.0 707.0 432.0 C720.6 432.0 725.0 448.8 727 474 Z" fill="#8c8c8c"/><g clip-path="url(#mc687)"><path d="M730 429 L684 429 L684 453.0 L682.7 451.9 Q686.4 450.1 687.0 446.7 Q687.6 450.1 691.3 451.9 Q693.7 454.5 696.1 451.9 L696.1 450.9 Q699.7 447.2 700.3 440.4 Q701.0 447.2 704.6 450.9 Q707.0 453.4 709.4 450.9 L709.4 453.0 Q713.0 450.1 713.7 444.6 Q714.3 450.1 717.9 453.0 Q720.3 455.5 722.7 453.0 L722.7 450.9 Q726.4 450.2 727.0 448.8 Q727.6 450.2 731.3 450.9 Q733.7 453.4 736.1 450.9 L730 453.0 Z" fill="#ffffff"/><rect x="687" y="471.5" width="40" height="2.5" fill="#333335"/><path d="M700 455 l2.0 -4.0" stroke="#3a3a3c" stroke-width="1.3"/><path d="M716 458 l-2.5 5.0" stroke="#3a3a3c" stroke-width="1.3"/></g><clipPath id="mc724"><path d="M724 474 C726.0 459.0 730.4 449.0 744.0 449.0 C757.6 449.0 762.0 459.0 764 474 Z"/></clipPath><path d="M724 474 C726.0 459.0 730.4 449.0 744.0 449.0 C757.6 449.0 762.0 459.0 764 474 Z" fill="#8c8c8c"/><g clip-path="url(#mc724)"><path d="M767 446 L721 446 L721 462.8 L719.7 462.1 Q723.4 459.7 724.0 455.2 Q724.6 459.7 728.3 462.1 Q730.7 463.6 733.1 462.1 L733.1 462.1 Q736.7 460.6 737.3 457.8 Q738.0 460.6 741.6 462.1 Q744.0 463.6 746.4 462.1 L746.4 461.5 Q750.0 458.9 750.7 454.0 Q751.3 458.9 754.9 461.5 Q757.3 463.0 759.7 461.5 L759.7 462.8 Q763.4 460.6 764.0 456.5 Q764.6 460.6 768.3 462.8 Q770.7 464.2 773.1 462.8 L767 462.8 Z" fill="#ffffff"/><rect x="724" y="472" width="40" height="2" fill="#333335"/></g><clipPath id="mc762"><path d="M762 474 C764.1 460.2 768.9 451.0 783.5 451.0 C798.1 451.0 802.9 460.2 805 474 Z"/></clipPath><path d="M762 474 C764.1 460.2 768.9 451.0 783.5 451.0 C798.1 451.0 802.9 460.2 805 474 Z" fill="#8c8c8c"/><g clip-path="url(#mc762)"><path d="M808 448 L759 448 L759 463.6 L757.4 462.5 Q761.3 460.1 762.0 455.6 Q762.7 460.1 766.6 462.5 Q769.2 463.9 771.7 462.5 L771.7 463.6 Q775.6 461.6 776.3 457.9 Q777.0 461.6 780.9 463.6 Q783.5 465.0 786.1 463.6 L786.1 462.5 Q790.0 461.7 790.7 460.2 Q791.4 461.7 795.3 462.5 Q797.8 463.9 800.4 462.5 L800.4 463.1 Q804.3 460.9 805.0 456.8 Q805.7 460.9 809.6 463.1 Q812.2 464.5 814.7 463.1 L808 463.6 Z" fill="#ffffff"/><rect x="762" y="472" width="43" height="2" fill="#333335"/></g><clipPath id="mc813"><path d="M813 474 C817.5 447.2 827.4 429.4 858.0 429.4 C888.6 429.4 898.5 447.2 903 474 Z"/></clipPath><path d="M813 474 C817.5 447.2 827.4 429.4 858.0 429.4 C888.6 429.4 898.5 447.2 903 474 Z" fill="#8c8c8c"/><g clip-path="url(#mc813)"><path d="M906 426.4 L810 426.4 L810 459.7 L808.2 459.7 Q812.3 455.0 813.0 446.3 Q813.7 455.0 817.8 459.7 Q820.5 462.4 823.2 459.7 L823.2 457.5 Q827.3 455.2 828.0 450.8 Q828.7 455.2 832.8 457.5 Q835.5 460.2 838.2 457.5 L838.2 458.6 Q842.3 453.5 843.0 444.1 Q843.7 453.5 847.8 458.6 Q850.5 461.3 853.2 458.6 L853.2 458.6 Q857.3 455.1 858.0 448.6 Q858.7 455.1 862.8 458.6 Q865.5 461.3 868.2 458.6 L868.2 457.5 Q872.3 452.0 873.0 441.9 Q873.7 452.0 877.8 457.5 Q880.5 460.2 883.2 457.5 L883.2 459.7 Q887.3 455.0 888.0 446.3 Q888.7 455.0 892.8 459.7 Q895.5 462.4 898.2 459.7 L898.2 457.5 Q902.3 455.2 903.0 450.8 Q903.7 455.2 907.8 457.5 Q910.5 460.2 913.2 457.5 L906 459.7 Z" fill="#ffffff"/><rect x="813" y="471" width="90" height="3" fill="#333335"/><path d="M835 474 l2.0 -4.0" stroke="#3a3a3c" stroke-width="1.3"/><path d="M870 465 l-2.5 5.0" stroke="#3a3a3c" stroke-width="1.3"/></g><clipPath id="mc899"><path d="M899 474 C903.5 446.2 913.6 427.6 944.5 427.6 C975.4 427.6 985.5 446.2 990 474 Z"/></clipPath><path d="M899 474 C903.5 446.2 913.6 427.6 944.5 427.6 C975.4 427.6 985.5 446.2 990 474 Z" fill="#8c8c8c"/><g clip-path="url(#mc899)"><path d="M993 424.6 L896 424.6 L896 458.2 L894.1 455.9 Q898.3 450.2 899.0 439.7 Q899.7 450.2 903.9 455.9 Q906.6 458.7 909.3 455.9 L909.3 458.2 Q913.4 453.4 914.2 444.3 Q914.9 453.4 919.0 458.2 Q921.8 461.0 924.5 458.2 L924.5 455.9 Q928.6 453.5 929.3 448.9 Q930.1 453.5 934.2 455.9 Q936.9 458.7 939.6 455.9 L939.6 457.1 Q943.8 451.8 944.5 442.0 Q945.2 451.8 949.4 457.1 Q952.1 459.8 954.8 457.1 L954.8 457.1 Q958.9 453.4 959.7 446.6 Q960.4 453.4 964.5 457.1 Q967.2 459.8 970.0 457.1 L970.0 455.9 Q974.1 450.2 974.8 439.7 Q975.6 450.2 979.7 455.9 Q982.4 458.7 985.1 455.9 L985.1 458.2 Q989.3 453.4 990.0 444.3 Q990.7 453.4 994.9 458.2 Q997.6 461.0 1000.3 458.2 L993 458.2 Z" fill="#ffffff"/><rect x="899" y="471" width="91" height="3" fill="#333335"/><path d="M940 466 l3.0 -6.0" stroke="#3a3a3c" stroke-width="1.3"/><path d="M965 458 l-3.0 6.0" stroke="#3a3a3c" stroke-width="1.3"/></g><rect x="434" y="474" width="552" height="25" fill="#a65828"/><rect x="434" y="474" width="552" height="11" fill="#4aa63a"/><path d="M434.0 485.2 L435.3 480.2 L436.6 485.2 Z M438.2 485.2 L439.9 479.2 L441.6 485.2 Z M443.3 485.2 L445.4 478.2 L447.5 485.2 Z M449.3 485.2 L450.6 477.2 L451.9 485.2 Z M456.2 485.2 L457.9 480.2 L459.6 485.2 Z M460.4 485.2 L462.5 479.2 L464.6 485.2 Z M465.5 485.2 L466.8 478.2 L468.1 485.2 Z M471.5 485.2 L473.2 477.2 L474.9 485.2 Z M478.4 485.2 L480.5 480.2 L482.6 485.2 Z M482.6 485.2 L483.9 479.2 L485.2 485.2 Z M487.7 485.2 L489.4 478.2 L491.1 485.2 Z M493.7 485.2 L495.8 477.2 L497.9 485.2 Z M500.6 485.2 L501.9 480.2 L503.2 485.2 Z M504.8 485.2 L506.5 479.2 L508.2 485.2 Z M509.9 485.2 L512.0 478.2 L514.1 485.2 Z M515.9 485.2 L517.2 477.2 L518.5 485.2 Z M522.8 485.2 L524.5 480.2 L526.2 485.2 Z M527.0 485.2 L529.1 479.2 L531.2 485.2 Z M532.1 485.2 L533.4 478.2 L534.7 485.2 Z M538.1 485.2 L539.8 477.2 L541.5 485.2 Z M545.0 485.2 L547.1 480.2 L549.2 485.2 Z M549.2 485.2 L550.5 479.2 L551.8 485.2 Z M554.3 485.2 L556.0 478.2 L557.7 485.2 Z M560.3 485.2 L562.4 477.2 L564.5 485.2 Z M567.2 485.2 L568.5 480.2 L569.8 485.2 Z M571.4 485.2 L573.1 479.2 L574.8 485.2 Z M576.5 485.2 L578.6 478.2 L580.7 485.2 Z M582.5 485.2 L583.8 477.2 L585.1 485.2 Z M589.4 485.2 L591.1 480.2 L592.8 485.2 Z M593.6 485.2 L595.7 479.2 L597.8 485.2 Z M598.7 485.2 L600.0 478.2 L601.3 485.2 Z M604.7 485.2 L606.4 477.2 L608.1 485.2 Z M611.6 485.2 L613.7 480.2 L615.8 485.2 Z M615.8 485.2 L617.1 479.2 L618.4 485.2 Z M620.9 485.2 L622.6 478.2 L624.3 485.2 Z M626.9 485.2 L629.0 477.2 L631.1 485.2 Z M633.8 485.2 L635.1 480.2 L636.4 485.2 Z M638.0 485.2 L639.7 479.2 L641.4 485.2 Z M643.1 485.2 L645.2 478.2 L647.3 485.2 Z M649.1 485.2 L650.4 477.2 L651.7 485.2 Z M656.0 485.2 L657.7 480.2 L659.4 485.2 Z M660.2 485.2 L662.3 479.2 L664.4 485.2 Z M665.3 485.2 L666.6 478.2 L667.9 485.2 Z M671.3 485.2 L673.0 477.2 L674.7 485.2 Z M678.2 485.2 L680.3 480.2 L682.4 485.2 Z M682.4 485.2 L683.7 479.2 L685.0 485.2 Z M687.5 485.2 L689.2 478.2 L690.9 485.2 Z M693.5 485.2 L695.6 477.2 L697.7 485.2 Z M700.4 485.2 L701.7 480.2 L703.0 485.2 Z M704.6 485.2 L706.3 479.2 L708.0 485.2 Z M709.7 485.2 L711.8 478.2 L713.9 485.2 Z M715.7 485.2 L717.0 477.2 L718.3 485.2 Z M722.6 485.2 L724.3 480.2 L726.0 485.2 Z M726.8 485.2 L728.9 479.2 L731.0 485.2 Z M731.9 485.2 L733.2 478.2 L734.5 485.2 Z M737.9 485.2 L739.6 477.2 L741.3 485.2 Z M744.8 485.2 L746.9 480.2 L749.0 485.2 Z M749.0 485.2 L750.3 479.2 L751.6 485.2 Z M754.1 485.2 L755.8 478.2 L757.5 485.2 Z M760.1 485.2 L762.2 477.2 L764.3 485.2 Z M767.0 485.2 L768.3 480.2 L769.6 485.2 Z M771.2 485.2 L772.9 479.2 L774.6 485.2 Z M776.3 485.2 L778.4 478.2 L780.5 485.2 Z M782.3 485.2 L783.6 477.2 L784.9 485.2 Z M789.2 485.2 L790.9 480.2 L792.6 485.2 Z M793.4 485.2 L795.5 479.2 L797.6 485.2 Z M798.5 485.2 L799.8 478.2 L801.1 485.2 Z M804.5 485.2 L806.2 477.2 L807.9 485.2 Z M811.4 485.2 L813.5 480.2 L815.6 485.2 Z M815.6 485.2 L816.9 479.2 L818.2 485.2 Z M820.7 485.2 L822.4 478.2 L824.1 485.2 Z M826.7 485.2 L828.8 477.2 L830.9 485.2 Z M833.6 485.2 L834.9 480.2 L836.2 485.2 Z M837.8 485.2 L839.5 479.2 L841.2 485.2 Z M842.9 485.2 L845.0 478.2 L847.1 485.2 Z M848.9 485.2 L850.2 477.2 L851.5 485.2 Z M855.8 485.2 L857.5 480.2 L859.2 485.2 Z M860.0 485.2 L862.1 479.2 L864.2 485.2 Z M865.1 485.2 L866.4 478.2 L867.7 485.2 Z M871.1 485.2 L872.8 477.2 L874.5 485.2 Z M878.0 485.2 L880.1 480.2 L882.2 485.2 Z M882.2 485.2 L883.5 479.2 L884.8 485.2 Z M887.3 485.2 L889.0 478.2 L890.7 485.2 Z M893.3 485.2 L895.4 477.2 L897.5 485.2 Z M900.2 485.2 L901.5 480.2 L902.8 485.2 Z M904.4 485.2 L906.1 479.2 L907.8 485.2 Z M909.5 485.2 L911.6 478.2 L913.7 485.2 Z M915.5 485.2 L916.8 477.2 L918.1 485.2 Z M922.4 485.2 L924.1 480.2 L925.8 485.2 Z M926.6 485.2 L928.7 479.2 L930.8 485.2 Z M931.7 485.2 L933.0 478.2 L934.3 485.2 Z M937.7 485.2 L939.4 477.2 L941.1 485.2 Z M944.6 485.2 L946.7 480.2 L948.8 485.2 Z M948.8 485.2 L950.1 479.2 L951.4 485.2 Z M953.9 485.2 L955.6 478.2 L957.3 485.2 Z M959.9 485.2 L962.0 477.2 L964.1 485.2 Z M966.8 485.2 L968.1 480.2 L969.4 485.2 Z M971.0 485.2 L972.7 479.2 L974.4 485.2 Z M976.1 485.2 L978.2 478.2 L980.3 485.2 Z M982.1 485.2 L983.4 477.2 L984.7 485.2 Z " fill="#a65828" opacity="0.85"/><rect x="434" y="473.4" width="552" height="1.4" fill="#2e5e2e"/><rect x="434" y="498.5" width="552" height="4.2" fill="#3a2230"/><rect x="434" y="500" width="552" height="1" fill="#5a3a5a" opacity="0.7"/><ellipse cx="445" cy="498" rx="2.6" ry="1.5" fill="#5a2a18"/><ellipse cx="491" cy="498" rx="2.6" ry="1.5" fill="#5a2a18"/><ellipse cx="537" cy="498" rx="2.6" ry="1.5" fill="#5a2a18"/><ellipse cx="583" cy="498" rx="2.6" ry="1.5" fill="#5a2a18"/><ellipse cx="629" cy="498" rx="2.6" ry="1.5" fill="#5a2a18"/><ellipse cx="675" cy="498" rx="2.6" ry="1.5" fill="#5a2a18"/><ellipse cx="721" cy="498" rx="2.6" ry="1.5" fill="#5a2a18"/><ellipse cx="767" cy="498" rx="2.6" ry="1.5" fill="#5a2a18"/><ellipse cx="813" cy="498" rx="2.6" ry="1.5" fill="#5a2a18"/><ellipse cx="859" cy="498" rx="2.6" ry="1.5" fill="#5a2a18"/><ellipse cx="905" cy="498" rx="2.6" ry="1.5" fill="#5a2a18"/><ellipse cx="951" cy="498" rx="2.6" ry="1.5" fill="#5a2a18"/><path d="M537 487.5 Q535 473.8 545.9 463.5 Q558.5 461.5 572.9 464.0 Q582 472.5 580 487.5 Z" fill="#8c8e8b" stroke="#6e706d" stroke-width="0.9"/><path d="M549.5 466.2 L569.8 467.5" stroke="#a4a6a3" stroke-width="1.2"/><path d="M556.2 471.2 L554.9 486.5" stroke="#747672" stroke-width="1"/><path d="M575 487.5 Q573 482.8 578.6 480.0 Q584.5 478.0 591.2 480.5 Q596 482.4 594 487.5 Z" fill="#8c8e8b" stroke="#6e706d" stroke-width="0.9"/><path d="M580.3 480.3 L589.8 480.7" stroke="#a4a6a3" stroke-width="1.2"/><path d="M583.5 482.0 L582.8 486.5" stroke="#747672" stroke-width="1"/><path d="M669 487 Q667 477.1 675.5 470.0 Q685.0 468.0 695.9 470.5 Q703 476.2 701 487 Z" fill="#8c8e8b" stroke="#6e706d" stroke-width="0.9"/><path d="M678.2 471.7 L693.5 472.6" stroke="#a4a6a3" stroke-width="1.2"/><path d="M683.3 475.3 L682.3 486.0" stroke="#747672" stroke-width="1"/><path d="M866 482.4 Q864 471.5 875.6 463.5 Q889.0 461.5 904.4 464.0 Q914 470.5 912 482.4 Z" fill="#8c8e8b" stroke="#6e706d" stroke-width="0.9"/><path d="M879.4 465.5 L901.0 466.5" stroke="#a4a6a3" stroke-width="1.2"/><path d="M886.6 469.5 L885.2 481.4" stroke="#747672" stroke-width="1"/><path d="M907 482.4 Q905 477.8 911.1 475.0 Q917.5 473.0 924.9 475.5 Q930 477.4 928 482.4 Z" fill="#8c8e8b" stroke="#6e706d" stroke-width="0.9"/><path d="M912.9 475.3 L923.2 475.7" stroke="#a4a6a3" stroke-width="1.2"/><path d="M916.4 476.9 L915.7 481.4" stroke="#747672" stroke-width="1"/><rect x="597.2" y="468" width="1.4" height="8" fill="#2f7a2a"/><polygon points="608.8,459.5 606.4,461.4 607.7,464.2 604.7,464.9 604.7,467.9 601.7,467.2 600.4,470.0 598.0,468.1 595.6,470.0 594.3,467.2 591.3,467.9 591.3,464.9 588.3,464.2 589.6,461.4 587.2,459.5 589.6,457.6 588.3,454.8 591.3,454.1 591.3,451.1 594.3,451.8 595.6,449.0 598.0,450.9 600.4,449.0 601.7,451.8 604.7,451.1 604.7,454.1 607.7,454.8 606.4,457.6" fill="#eea21e"/><circle cx="598" cy="459.5" r="8.2" fill="#f2b02a"/><ellipse cx="598" cy="459.5" rx="5" ry="5.6" fill="#9a5626"/><rect x="776" y="480" width="12" height="14.5" fill="#a86a18"/><rect x="780" y="482" width="1" height="12" fill="#7a4a10"/><rect x="784" y="482" width="1" height="12" fill="#7a4a10"/><path d="M765 457 Q770 454 781 454.5 Q792 454 797 456 L798.5 483.5 Q782 485.5 766 484.5 Z" fill="#e09a22" stroke="#9a5a14" stroke-width="0.8"/><path d="M766 463.5 L798 463 M766 470 L798 469.5 M766 476.5 L798 476" stroke="#b06a14" stroke-width="0.9"/><path d="M779.5 462 Q781.5 460 783.5 462 L782.5 475 L780.5 475 Z" fill="#7a4210"/><circle cx="781.5" cy="479" r="1.8" fill="#7a4210"/><rect x="811" y="277" width="1" height="226" fill="#6a6a98" opacity="0.45"/><path d="M479 464 L493 464 L493 474 L479 474 Z" fill="#4c4c88"/><ellipse cx="482" cy="470" rx="3" ry="2.5" fill="#f0e8f0"/><rect x="480" y="473" width="9" height="2.5" fill="#d8d8e0"/><path d="M473 456 Q474 449 486 449 Q501 449 501 456 Q501 464 487 464.5 Q474 464 473 456Z" fill="#f8dfc6"/><path d="M463 446 Q461 433 470 430 Q478 427 492 428.5 Q504 431 506 440 Q506 447 502 449 Q497 447 494 452 Q489 446 482 452 Q478 456 476 462 Q470 464 466 458 Q462 453 463 446Z" fill="#ba8034"/><path d="M470 436 Q480 432 492 434" stroke="#a06a28" stroke-width="1.5" fill="none"/><ellipse cx="493" cy="456" rx="2.2" ry="3" fill="#4a7a4a"/><ellipse cx="476" cy="456" rx="2.5" ry="3" fill="#f6d6ba"/><rect x="346.5" y="154.5" width="638" height="478" fill="none" stroke="#5a5a5a" stroke-width="1.5" opacity="0.7"/><rect x="345.5" y="153.5" width="640" height="480" fill="none" stroke="#858587" stroke-width="1"/></svg>
<div class="a" style="left:345px;top:635px;width:641px;height:8px;background:#24222a;border-radius:4px"></div>
<div class="a" style="left:411px;top:636px;width:144px;height:6px;background:#5a5862;border-radius:3px"></div>
<div class="a" style="left:987px;top:153px;width:7px;height:490px;background:#24222a;border-radius:3px"></div>
<div class="a" style="left:987px;top:231.5px;width:6.5px;height:345px;background:#55535e;border-radius:3px"></div>
<div class="a" style="left:339px;top:663px;width:663px;height:31px;background:#403d49;border:1px solid #4a4753;"></div>
<div class="t" style="left:347.60px;top:674.04px;font-size:12px;line-height:12px;color:#dedce4;transform:scaleX(1.0326);transform-origin:0 0;">Output</div>
<div class="t" style="left:398.80px;top:674.04px;font-size:12px;line-height:12px;color:#dedce4;transform:scaleX(0.9562);transform-origin:0 0;">Debugger</div>
<div class="t" style="left:463.00px;top:674.04px;font-size:12px;line-height:12px;color:#dedce4;transform:scaleX(0.9707);transform-origin:0 0;">Animation</div>
<div class="a" style="left:1011px;top:130px;width:200px;height:266px;background:#403d49;border:1px solid #4a4753;"></div>
<svg class="a" style="left:1019px;top:140px;" width="15" height="15" viewBox="0 0 15 15"><path d="M7.5 1.5 V13.5 M1.5 7.5 H13.5" stroke="#eeeef2" stroke-width="1.8"/></svg>
<svg class="a" style="left:1046px;top:140px;" width="15" height="15" viewBox="0 0 15 15"><g fill="none" stroke="#eeeef2" stroke-width="1.7"><path d="M6.4 8.6 L3.6 11.4 A1.9 1.9 0 0 1 1 8.8 L3.8 6 A1.9 1.9 0 0 1 6.4 6"/><path d="M8.6 6.4 L11.4 3.6 A1.9 1.9 0 0 0 8.8 1 L6 3.8 A1.9 1.9 0 0 0 6 6.4"/><path d="M5.4 9.6 L9.6 5.4"/></g></svg>
<div class="a" style="left:1069px;top:136px;width:116px;height:22px;background:#2a2831;border:1px solid #2e2c35;"></div>
<svg class="a" style="left:1186px;top:141px;" width="14" height="12" viewBox="0 0 14 12"><circle cx="5.5" cy="5" r="3.6" fill="none" stroke="#eeeef2" stroke-width="1.8"/><path d="M8.2 7.6 L12 11" stroke="#eeeef2" stroke-width="2.2"/></svg>
<div class="a" style="left:1015px;top:162px;width:200px;height:230px;background:#2a2832;border:1px solid #24222b;"></div>
<div class="a" style="left:1027px;top:164px;width:131px;height:22px;background:#2a2832;border:1px solid #3e4a5e;"></div>
<svg class="a" style="left:1019px;top:172px;" width="9" height="7" viewBox="0 0 9 7"><path d="M0.5 1 Q0.5 0 2 0 L7 0 Q8.5 0 8.5 1 L4.5 6 Z" fill="#eeeef2"/></svg>
<svg class="a" style="left:1028px;top:168px;" width="14" height="14" viewBox="0 0 14 14"><circle cx="7" cy="7" r="4.4" fill="none" stroke="#a4b4ec" stroke-width="1.6"/></svg>
<div class="t" style="left:1045.60px;top:169.44px;font-size:12px;line-height:12px;color:#c4c2cc;transform:scaleX(0.9516);transform-origin:0 0;">Node2D</div>
<svg class="a" style="left:1161px;top:169px;" width="14" height="13" viewBox="0 0 14 13"><g fill="#eeeef2"><circle cx="4" cy="1.5" r="0.9"/><circle cx="7" cy="1.2" r="0.9"/><circle cx="10" cy="1" r="0.9"/><rect x="1" y="3.5" width="12" height="8"/></g><path d="M4.5 5.5 L9.5 5.5 L7 9Z" fill="#2a2832"/></svg>
<svg class="a" style="left:1181px;top:169.5px;" width="14" height="11" viewBox="0 0 14 11"><ellipse cx="7" cy="5.5" rx="5.6" ry="4.6" fill="none" stroke="#eeeef2" stroke-width="1.6"/><circle cx="7" cy="5.5" r="2" fill="#eeeef2"/></svg>
<svg class="a" style="left:1031px;top:190.5px;" width="7" height="9" viewBox="0 0 7 9"><path d="M1 0.5 Q0 0.5 0 2 L0 7 Q0 8.5 1 8.5 L6 4.5 Z" fill="#eeeef2"/></svg>
<svg class="a" style="left:1038px;top:189px;" width="14" height="12" viewBox="0 0 14 12"><rect x="1" y="1" width="11.5" height="9.5" fill="none" stroke="#d8d6de" stroke-width="1.2"/><path d="M6 3 L3 5.75 L6 8.5Z M7.5 3 L10.5 5.75 L7.5 8.5Z" fill="#d8d6de"/></svg>
<div class="t" style="left:1055.80px;top:189.44px;font-size:12px;line-height:12px;color:#d47c46;transform:scaleX(0.9460);transform-origin:0 0;">ParallaxBackground</div>
<svg class="a" style="left:1031px;top:210.7px;" width="7" height="9" viewBox="0 0 7 9"><path d="M1 0.5 Q0 0.5 0 2 L0 7 Q0 8.5 1 8.5 L6 4.5 Z" fill="#eeeef2"/></svg>
<svg class="a" style="left:1038px;top:208px;" width="14" height="14" viewBox="0 0 14 14"><circle cx="7" cy="7" r="6" fill="#9cb0ec"/><path d="M4 6.5 Q7 11 10 6.5Z" fill="#3a4a8a"/><circle cx="4.8" cy="4.8" r="0.9" fill="#3a4a8a"/><circle cx="9.2" cy="4.8" r="0.9" fill="#3a4a8a"/></svg>
<div class="t" style="left:1055.80px;top:209.24px;font-size:12px;line-height:12px;color:#d47c46;transform:scaleX(0.9285);transform-origin:0 0;">obstacle</div>
<svg class="a" style="left:1181px;top:209.8px;" width="14" height="11" viewBox="0 0 14 11"><ellipse cx="7" cy="5.5" rx="5.6" ry="4.6" fill="none" stroke="#eeeef2" stroke-width="1.6"/><circle cx="7" cy="5.5" r="2" fill="#eeeef2"/></svg>
<svg class="a" style="left:1037px;top:227px;" width="17" height="16" viewBox="0 0 17 16"><circle cx="10" cy="6.5" r="5.8" fill="#7e8aa8"/><circle cx="7" cy="9" r="6" fill="#9cb0ec"/><path d="M4 8.5 Q7 13 10 8.5Z" fill="#3a4a8a"/><circle cx="4.8" cy="7" r="0.9" fill="#3a4a8a"/><circle cx="9.2" cy="7" r="0.9" fill="#3a4a8a"/></svg>
<div class="t" style="left:1055.40px;top:229.54px;font-size:12px;line-height:12px;color:#cfcdd5;transform:scaleX(0.9167);transform-origin:0 0;">char</div>
<svg class="a" style="left:1181px;top:230px;" width="14" height="11" viewBox="0 0 14 11"><ellipse cx="7" cy="5.5" rx="5.6" ry="4.6" fill="none" stroke="#eeeef2" stroke-width="1.6"/><circle cx="7" cy="5.5" r="2" fill="#eeeef2"/></svg>
<div class="a" style="left:1036px;top:405px;width:76px;height:23px;background:#403d49;border:1px solid #4a4753;border-bottom:none"></div>
<div class="a" style="left:1111px;top:408px;width:55px;height:19px;background:#2d2b35;border:1px solid #35333d"></div>
<div class="t" style="left:1049.80px;top:410.84px;font-size:12px;line-height:12px;color:#e6e4ec;transform:scaleX(0.9765);transform-origin:0 0;">Inspector</div>
<div class="t" style="left:1125.70px;top:411.54px;font-size:12px;line-height:12px;color:#b4b2bc;transform:scaleX(0.9446);transform-origin:0 0;">Node</div>
<svg class="a" style="left:1190px;top:409px;" width="12" height="10" viewBox="0 0 12 10"><path d="M2 3.2 Q2 2 3.5 2 L8.5 2 Q10 2 10 3.2 L6 8 Z" fill="#eeeef2"/></svg>
<div class="a" style="left:1011px;top:427px;width:200px;height:267px;background:#403d49;border:1px solid #4a4753;"></div>
<svg class="a" style="left:1020px;top:437px;" width="14" height="14" viewBox="0 0 14 14"><path d="M1.5 1 L8.5 1 L12 4.5 L12 13 L1.5 13 Z" fill="#eeeef2"/><path d="M8.5 1 L8.5 4.5 L12 4.5" fill="#bcbac4"/></svg>
<svg class="a" style="left:1045px;top:437px;" width="17" height="14" viewBox="0 0 17 14"><path d="M1.5 3 L6 3 L7 4.5 L13 4.5 L13 6.5 L4.5 6.5 L1.5 12.5Z" fill="#eeeef2"/><path d="M4.8 7.2 L15.5 7.2 L12.8 12.6 L1.8 12.6Z" fill="#eeeef2"/></svg>
<svg class="a" style="left:1073px;top:437px;" width="15" height="14" viewBox="0 0 15 14"><path d="M1.5 1 L11 1 L13.5 3.5 L13.5 13 L1.5 13Z" fill="#7e7c88"/><rect x="4" y="1" width="6" height="4" fill="#403d49"/><circle cx="7.5" cy="9" r="1.7" fill="#403d49"/></svg>
<svg class="a" style="left:1141px;top:438px;" width="10" height="13" viewBox="0 0 10 13"><path d="M8 0.5 L1.5 6.5 L8 12.5Z" fill="#6e6c78"/></svg>
<svg class="a" style="left:1161px;top:438px;" width="10" height="13" viewBox="0 0 10 13"><path d="M2 0.5 L8.5 6.5 L2 12.5Z" fill="#6e6c78"/></svg>
<svg class="a" style="left:1183px;top:438px;" width="14" height="13" viewBox="0 0 14 13"><path d="M3 4.5 A5 5 0 1 1 3.2 9" fill="none" stroke="#eeeef2" stroke-width="1.5"/><path d="M0.3 3.5 L5.2 3.6 L2.6 7.6Z" fill="#eeeef2"/><path d="M8 3.5 V6.8 L10.2 8.4" fill="none" stroke="#eeeef2" stroke-width="1.3"/></svg>
<svg class="a" style="left:1019px;top:461px;" width="14" height="14" viewBox="0 0 14 14"><circle cx="7" cy="7" r="4.4" fill="none" stroke="#a4b4ec" stroke-width="1.6"/></svg>
<div class="t" style="left:1036.50px;top:461.84px;font-size:12px;line-height:12px;color:#e6e4ec;transform:scaleX(0.9539);transform-origin:0 0;">Node2D</div>
<svg class="a" style="left:1155px;top:461px;" width="14" height="13" viewBox="0 0 14 13"><circle cx="5.5" cy="5" r="3.6" fill="none" stroke="#eeeef2" stroke-width="1.8"/><path d="M8.2 7.6 L12 11" stroke="#eeeef2" stroke-width="2.2"/></svg>
<svg class="a" style="left:1182px;top:460px;" width="16" height="16" viewBox="0 0 16 16"><g fill="#eeeef2"><circle cx="8" cy="8" r="4.6"/><path d="M6.8 1.5h2.4v3h-2.4zM6.8 11.5h2.4v3h-2.4zM1.5 6.8h3v2.4h-3zM11.5 6.8h3v2.4h-3z"/><path d="M2.6 4.3 L4.3 2.6 L6.3 4.6 L4.6 6.3Z M9.7 11.4 L11.4 9.7 L13.4 11.7 L11.7 13.4Z M2.6 11.7 L4.6 9.7 L6.3 11.4 L4.3 13.4Z M9.7 4.6 L11.7 2.6 L13.4 4.3 L11.4 6.3Z"/></g><circle cx="8" cy="8" r="1.8" fill="#403d49"/></svg>
<div class="a" style="left:1015px;top:481px;width:200px;height:209px;background:#2a2832;border:1px solid #24222b;"></div>
<div class="a" style="left:1018px;top:483px;width:169px;height:21px;background:#3a3843;"></div>
<div class="t" style="left:1022.30px;top:487.64px;font-size:12px;line-height:12px;color:#c4c2cc;transform:scaleX(0.9516);transform-origin:0 0;">Node2D</div>
<div class="a" style="left:1025px;top:504px;width:162px;height:20px;background:#2e2c36;"></div>
<div class="t" style="left:1032.40px;top:507.64px;font-size:12px;line-height:12px;color:#cfcdd5;transform:scaleX(0.9773);transform-origin:0 0;">Transform</div>
<div class="a" style="left:1025px;top:524px;width:14px;height:60px;background:#2e2c36;"></div>
<div class="t" style="left:1042.40px;top:528.44px;font-size:12px;line-height:12px;color:#c4c2cc;transform:scaleX(0.9188);transform-origin:0 0;">Pos</div>
<div class="t" style="left:1127.50px;top:528.44px;font-size:12px;line-height:12px;color:#c4c2cc;transform:scaleX(0.9818);transform-origin:0 0;">(0, 0)</div>
<svg class="a" style="left:1179px;top:529.6px;" width="10" height="7" viewBox="0 0 10 7"><path d="M0.8 1.2 Q0.8 0.3 2 0.3 L7.6 0.3 Q8.8 0.3 8.8 1.2 L4.8 5.8Z" fill="#eeeef2"/></svg>
<div class="t" style="left:1042.40px;top:548.44px;font-size:12px;line-height:12px;color:#c4c2cc;transform:scaleX(0.9639);transform-origin:0 0;">Rot</div>
<div class="t" style="left:1127.50px;top:548.44px;font-size:12px;line-height:12px;color:#c4c2cc;transform:scaleX(0.8990);transform-origin:0 0;">0</div>
<svg class="a" style="left:1179px;top:548.1px;" width="10" height="11" viewBox="0 0 10 11"><path d="M1.2 4.2 L4.8 1 L8.4 4.2 M1.2 6.6 L4.8 9.8 L8.4 6.6" fill="none" stroke="#eeeef2" stroke-width="1.5"/></svg>
<div class="t" style="left:1042.40px;top:568.14px;font-size:12px;line-height:12px;color:#c4c2cc;transform:scaleX(0.8461);transform-origin:0 0;">Scale</div>
<div class="t" style="left:1127.50px;top:568.14px;font-size:12px;line-height:12px;color:#c4c2cc;transform:scaleX(0.9818);transform-origin:0 0;">(1, 1)</div>
<svg class="a" style="left:1179px;top:569.3px;" width="10" height="7" viewBox="0 0 10 7"><path d="M0.8 1.2 Q0.8 0.3 2 0.3 L7.6 0.3 Q8.8 0.3 8.8 1.2 L4.8 5.8Z" fill="#eeeef2"/></svg>
<div class="a" style="left:1025px;top:584px;width:162px;height:20px;background:#2e2c36;"></div>
<div class="t" style="left:1031.80px;top:588.24px;font-size:12px;line-height:12px;color:#cfcdd5;transform:scaleX(0.9822);transform-origin:0 0;">Z</div>
<div class="a" style="left:1025px;top:604px;width:14px;height:40px;background:#2e2c36;"></div>
<div class="t" style="left:1042.40px;top:608.34px;font-size:12px;line-height:12px;color:#c4c2cc;transform:scaleX(1.0368);transform-origin:0 0;">Z</div>
<div class="t" style="left:1127.50px;top:608.34px;font-size:12px;line-height:12px;color:#c4c2cc;transform:scaleX(0.8990);transform-origin:0 0;">0</div>
<svg class="a" style="left:1179px;top:608px;" width="10" height="11" viewBox="0 0 10 11"><path d="M1.2 4.2 L4.8 1 L8.4 4.2 M1.2 6.6 L4.8 9.8 L8.4 6.6" fill="none" stroke="#eeeef2" stroke-width="1.5"/></svg>
<div class="t" style="left:1042.40px;top:628.44px;font-size:12px;line-height:12px;color:#c4c2cc;transform:scaleX(0.9180);transform-origin:0 0;">Relative</div>
<svg class="a" style="left:1128px;top:628px;" width="13" height="12" viewBox="0 0 13 12"><rect x="0.5" y="1" width="11" height="11" fill="#25232b"/><path d="M2.8 5.8 L5 8.6 L9.5 1.8" fill="none" stroke="#eeeef2" stroke-width="1.6"/></svg>
<div class="t" style="left:1144.70px;top:628.44px;font-size:12px;line-height:12px;color:#c4c2cc;transform:scaleX(0.8870);transform-origin:0 0;">On</div>
<div class="a" style="left:1018px;top:645px;width:169px;height:20px;background:#3a3843;"></div>
<div class="t" style="left:1021.60px;top:648.64px;font-size:12px;line-height:12px;color:#c4c2cc;transform:scaleX(0.9371);transform-origin:0 0;">CanvasItem</div>
<div class="t" style="left:1031.80px;top:668.74px;font-size:12px;line-height:12px;color:#cfcdd5;transform:scaleX(0.9321);transform-origin:0 0;">Visibility</div>
<div class="a" style="left:1192px;top:483px;width:5px;height:205px;background:#24222a;border-radius:2px"></div>
<div class="a" style="left:1192px;top:485px;width:5px;height:84px;background:#3a3842;border-radius:2px"></div>
</div></div>

</body></html>
